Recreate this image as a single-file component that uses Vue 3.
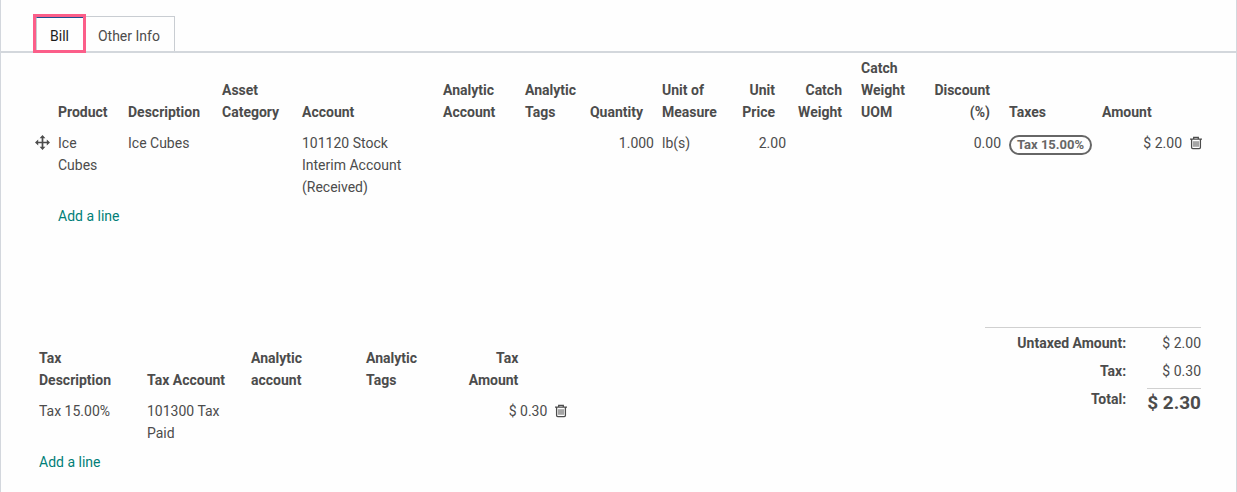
<script setup>
import { ref } from 'vue'

const activeTab = ref('Bill')
const tabs = ['Bill', 'Other Info']

const lineColumns = [
  { key: 'product', label: 'Product' },
  { key: 'description', label: 'Description' },
  { key: 'asset', label: 'Asset Category' },
  { key: 'account', label: 'Account' },
  { key: 'analytic', label: 'Analytic Account' },
  { key: 'tags', label: 'Analytic Tags' },
  { key: 'quantity', label: 'Quantity', num: true },
  { key: 'uom', label: 'Unit of Measure' },
  { key: 'price', label: 'Unit Price', num: true },
  { key: 'catch', label: 'Catch Weight', num: true },
  { key: 'catchUom', label: 'Catch Weight UOM' },
  { key: 'discount', label: 'Discount (%)', num: true },
]

const lines = [
  {
    product: 'Ice Cubes',
    description: 'Ice Cubes',
    account: '101120 Stock Interim Account (Received)',
    quantity: '1.000',
    uom: 'lb(s)',
    price: '2.00',
    discount: '0.00',
    tax: 'Tax 15.00%',
    amount: '$ 2.00',
  },
]
</script>

<template>
  <main class="sheet">
    <nav class="tabs" role="tablist">
      <button
        v-for="tab in tabs"
        :key="tab"
        type="button"
        role="tab"
        class="tab"
        :class="{ active: tab === activeTab }"
        :aria-selected="tab === activeTab"
        @click="activeTab = tab"
      >
        <span>{{ tab }}</span>
      </button>
    </nav>

    <section class="content">
      <table class="grid lines">
        <colgroup>
          <col class="c-handle" />
          <col v-for="c in lineColumns" :key="c.key" :class="'c-' + c.key" />
          <col class="c-taxes" />
          <col class="c-amount" />
          <col class="c-trash" />
        </colgroup>
        <thead>
          <tr>
            <th></th>
            <th v-for="c in lineColumns" :key="c.key" scope="col" :class="{ num: c.num }">{{ c.label }}</th>
            <th scope="col">Taxes</th>
            <th scope="col">Amount</th>
            <th></th>
          </tr>
        </thead>
        <tbody>
          <tr v-for="(line, i) in lines" :key="i">
            <td class="icon-cell">
              <svg class="move" viewBox="0 0 14 14" aria-hidden="true">
                <path d="M7 0 4.3 3H6.200V6.200H3V4.300L0 7l3 2.700V7.800H6.200V11H4.300L7 14l2.700-3H7.800V7.800H11V9.700L14 7 11 4.300V6.200H7.800V3H9.700Z" />
              </svg>
            </td>
            <td v-for="c in lineColumns" :key="c.key" :class="{ num: c.num, product: c.key === 'product' }">{{ line[c.key] }}</td>
            <td><span class="badge">{{ line.tax }}</span></td>
            <td class="num">{{ line.amount }}</td>
            <td class="icon-cell">
              <button type="button" class="trash" aria-label="Delete line">
                <svg viewBox="0 0 12 14" aria-hidden="true">
                  <path d="M0 3.200H12M3.700 3V1.300H8.300V3M1.600 3.400V11.600Q1.600 12.700 2.700 12.700H9.300Q10.400 12.700 10.400 11.600V3.400" />
                  <path class="thin" d="M4 5.200V10.800M6 5.200V10.800M8 5.200V10.800" />
                </svg>
              </button>
            </td>
          </tr>
          <tr class="add">
            <td></td>
            <td colspan="15"><a href="#">Add a line</a></td>
          </tr>
        </tbody>
      </table>

      <div class="bottom">
        <table class="grid taxes">
          <colgroup>
            <col class="t-desc" />
            <col class="t-account" />
            <col class="t-analytic" />
            <col class="t-tags" />
            <col class="t-amount" />
            <col class="c-trash" />
          </colgroup>
          <thead>
            <tr>
              <th scope="col">Tax Description</th>
              <th scope="col">Tax Account</th>
              <th scope="col">Analytic account</th>
              <th scope="col">Analytic Tags</th>
              <th scope="col" class="num">Tax Amount</th>
              <th></th>
            </tr>
          </thead>
          <tbody>
            <tr>
              <td>Tax 15.00%</td>
              <td>101300 Tax Paid</td>
              <td></td>
              <td></td>
              <td class="num">$ 0.30</td>
              <td class="icon-cell">
                <button type="button" class="trash" aria-label="Delete tax">
                  <svg viewBox="0 0 12 14" aria-hidden="true">
                    <path d="M0 3.200H12M3.700 3V1.300H8.300V3M1.600 3.400V11.600Q1.600 12.700 2.700 12.700H9.300Q10.400 12.700 10.400 11.600V3.400" />
                    <path class="thin" d="M4 5.200V10.800M6 5.200V10.800M8 5.200V10.800" />
                  </svg>
                </button>
              </td>
            </tr>
            <tr class="add">
              <td colspan="6"><a href="#">Add a line</a></td>
            </tr>
          </tbody>
        </table>

        <dl class="totals">
          <dt>Untaxed Amount:</dt>
          <dd>$ 2.00</dd>
          <dt>Tax:</dt>
          <dd>$ 0.30</dd>
          <dt>Total:</dt>
          <dd class="total">$ 2.30</dd>
        </dl>
      </div>
    </section>
  </main>
</template>

<style>
body {
  background: #fefefe;
}
</style>

<style scoped>
.sheet {
  box-sizing: border-box;
  min-height: 100vh;
  border: solid #d3d7dd;
  border-width: 0 1px;
  color: #4c4c4c;
  font: 14px/22px Roboto, "Liberation Sans", sans-serif;
}
.tabs {
  display: flex;
  align-items: flex-end;
  padding: 14px 32px 0;
  background: linear-gradient(#d3d7dc, #d3d7dc) bottom / 100% 2px no-repeat;
}
.tab {
  height: 35px;
  margin: 0 0 2px;
  padding: 4px 14px 0 12px;
  border: 1px solid #c9cdd2;
  border-width: 1px 1px 0 0;
  background: #fefefe;
  color: #4c4c4c;
  font: inherit;
}
.tab.active {
  height: 39px;
  margin: 0;
  padding: 0;
  border: 3px solid #fb5e89;
  color: #1c1c1c;
}
.tab.active span {
  display: block;
  box-sizing: border-box;
  height: 33px;
  padding: 7px 14px 0 13px;
  border-top: 1px solid #1d4f91;
  border-left: 1px solid #c9cdd2;
}
.content {
  padding: 4px 30px 0 34px;
}
.grid {
  width: 100%;
  border-collapse: collapse;
  table-layout: fixed;
}
th,
td {
  padding: 0 4px;
  text-align: left;
  vertical-align: top;
}
th {
  padding: 0 15px 9px 4px;
  vertical-align: bottom;
  font-weight: 700;
}
.lines th:not(.num) {
  padding-right: 0;
}
.num {
  text-align: right;
}
.product {
  padding-right: 15px;
}
.add td {
  padding-top: 7px;
}
a {
  color: #017e78;
  text-decoration: none;
}
.c-handle { width: 19px; }
.c-product { width: 70px; }
.c-description { width: 94px; }
.c-asset { width: 80px; }
.c-analytic { width: 82px; }
.c-tags { width: 63px; }
.c-quantity { width: 74px; }
.c-uom { width: 76px; }
.c-price { width: 56px; }
.c-catch { width: 67px; }
.c-catchUom { width: 72px; }
.c-discount { width: 76px; }
.c-taxes { width: 93px; }
.c-amount { width: 88px; }
.c-trash { width: 20px; }
.icon-cell {
  padding: 0;
}
.move {
  display: block;
  width: 15px;
  height: 15px;
  margin-top: 3px;
  fill: #4c4c4c;
}
.trash {
  display: block;
  margin: 4px 0 0 4px;
  padding: 0;
  border: 0;
  background: none;
}
.trash svg {
  display: block;
  width: 12px;
  height: 14px;
  fill: none;
  stroke: #4c4c4c;
  stroke-width: 1.3;
}
.trash .thin {
  stroke-width: 1;
}
.badge {
  display: inline-block;
  box-sizing: border-box;
  height: 20px;
  margin-top: 3px;
  padding: 0 6px;
  border: 2px solid #666;
  border-radius: 10px;
  color: #666;
  font-size: 13px;
  font-weight: 700;
  line-height: 16px;
  white-space: nowrap;
}
.bottom {
  display: flex;
  align-items: flex-start;
  justify-content: space-between;
  padding: 100px 5px 0 0;
}
.taxes {
  width: 46%;
  margin-top: 20px;
}
.t-desc { width: 108px; }
.t-account { width: 104px; }
.t-analytic { width: 115px; }
.taxes .t-tags { width: 97px; }
.taxes th.num {
  padding-right: 33px;
}
.totals {
  display: grid;
  grid-template-columns: 1fr auto;
  column-gap: 21px;
  row-gap: 6px;
  min-width: 216px;
  margin: 0;
  padding-top: 4px;
  border-top: 1px solid #d0d0d0;
  text-align: right;
}
.totals dt {
  font-weight: 700;
}
.totals dd {
  margin: 0;
}
.totals .total {
  border-top: 1px solid #d0d0d0;
  font-size: 19px;
  font-weight: 700;
  line-height: 28px;
}
</style>
